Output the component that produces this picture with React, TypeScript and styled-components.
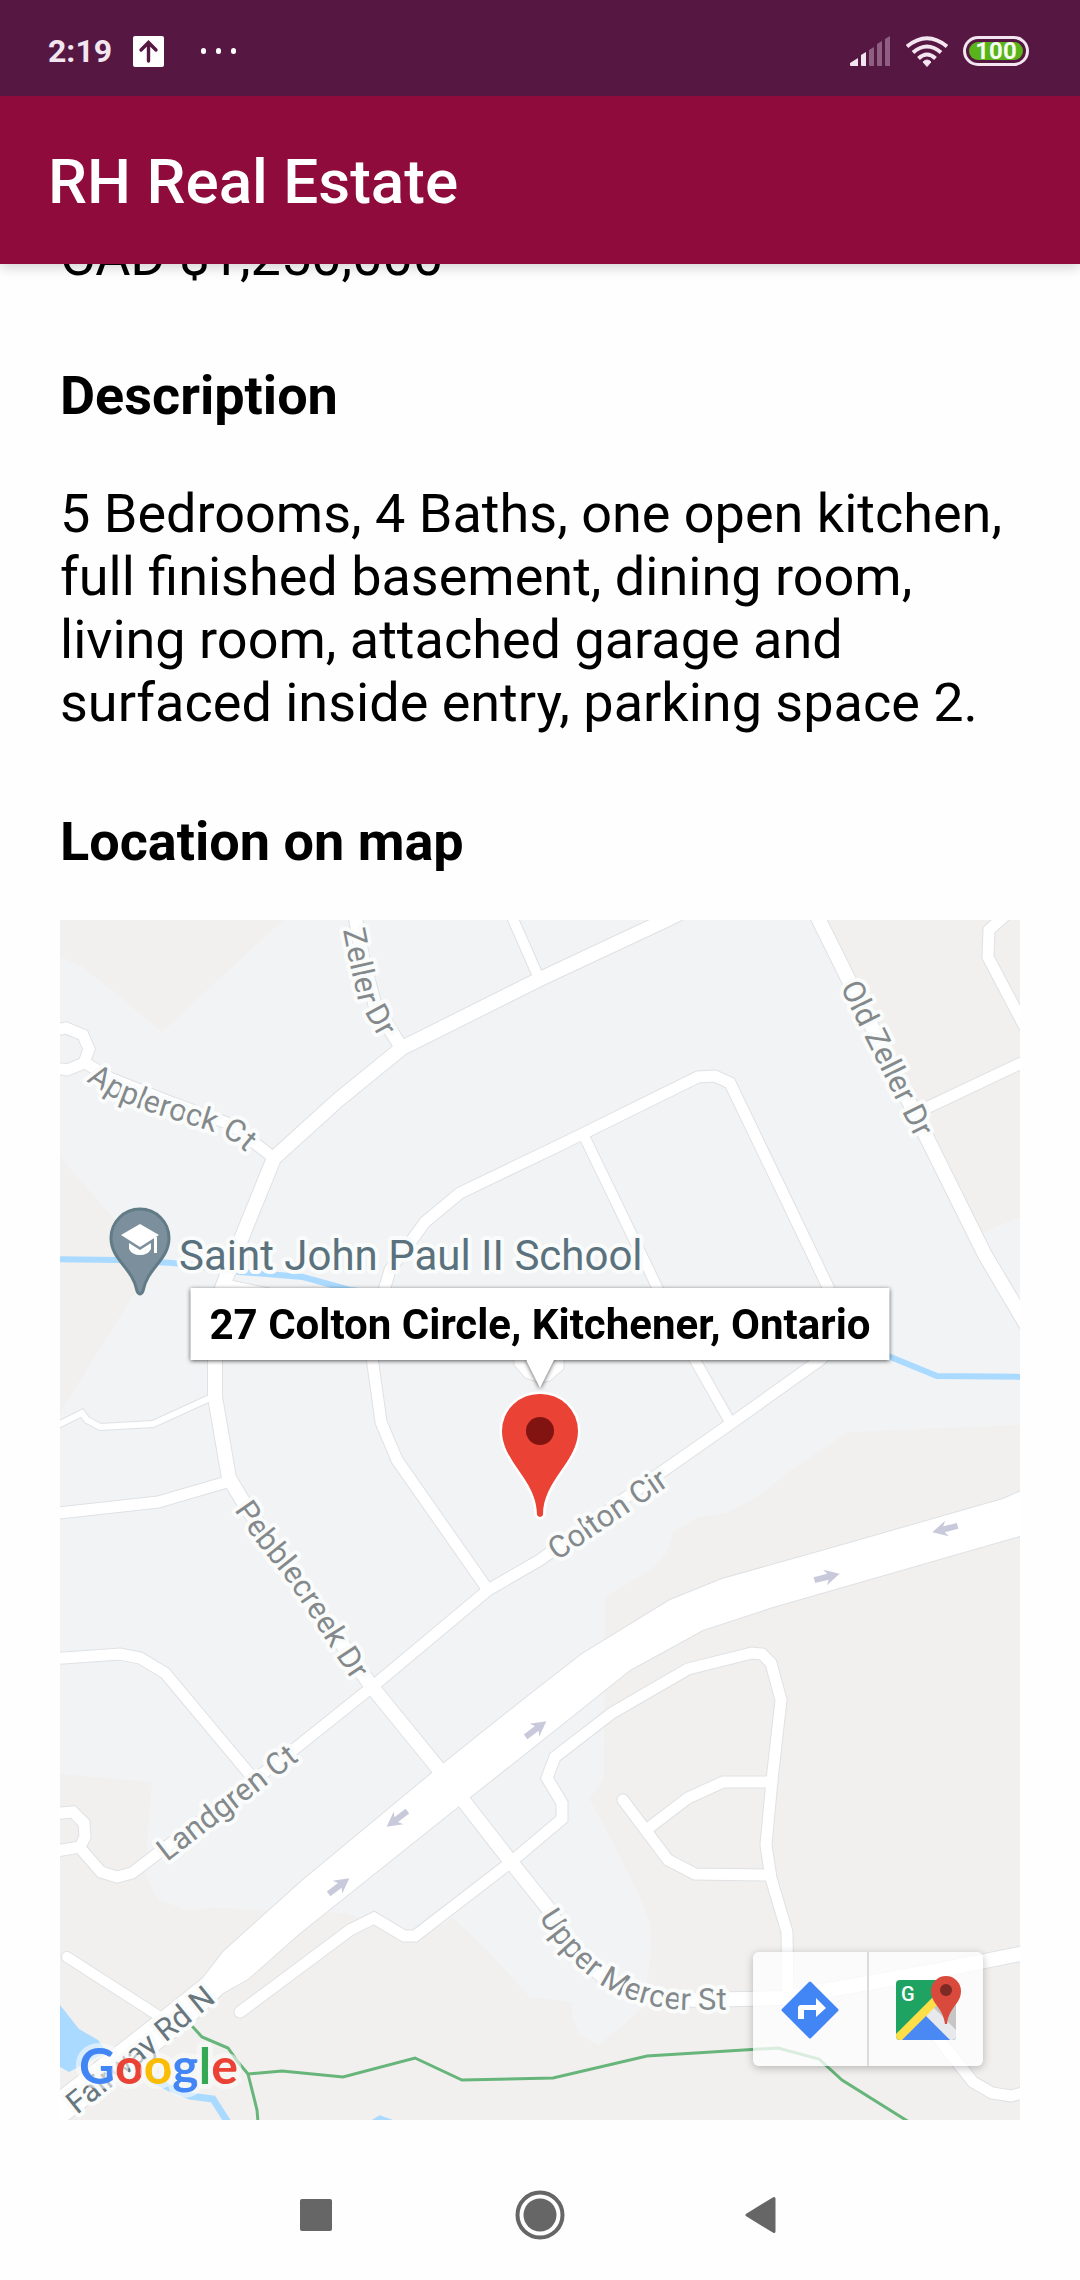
import React from "react";
import styled, { createGlobalStyle } from "styled-components";

const GlobalStyle = createGlobalStyle`
  * { box-sizing: border-box; }
  html, body { margin: 0; }
  body { background: #fefefe; color: #000; font-family: Roboto, "Noto Sans", sans-serif; }
`;

/* ---------- page frame ---------- */

const Screen = styled.div`
  display: flex;
  flex-direction: column;
  min-height: 100vh;
`;

const StatusBar = styled.div`
  display: flex;
  align-items: center;
  justify-content: space-between;
  height: 96px;
  padding: 6px 51px 0 48px;
  background: #561843;
  color: #f3e6f0;
  position: relative;
  z-index: 2;
`;

const StatusGroup = styled.div<{ $gap: number }>`
  display: flex;
  align-items: center;
  gap: ${(p) => p.$gap}px;
  svg { display: block; }
`;

const Clock = styled.time`
  font-size: 32px;
  line-height: 36px;
  font-weight: 700;
`;

const Dots = styled.span`
  display: flex;
  gap: 10px;
  margin-left: 16px;
`;

const Dot = styled.i`
  width: 5px;
  height: 6px;
  border-radius: 3px;
  background: #fff;
`;

const Battery = styled.div`
  display: flex;
  padding: 3px;
  width: 66px;
  height: 30px;
  border: 3px solid #f3e6f0;
  border-radius: 15px;
`;

const BatteryLevel = styled.span`
  flex: 1;
  border-radius: 9px;
  background: #59b31a;
  color: #f6fbf2;
  font-size: 24px;
  line-height: 18px;
  font-weight: 700;
  display: flex;
  justify-content: center;
`;

const AppBar = styled.header`
  display: flex;
  align-items: center;
  height: 168px;
  padding: 4px 48px 0;
  background: #8e0b3b;
  color: #fff;
  box-shadow: 0 3px 12px rgba(0, 0, 0, 0.18);
  position: relative;
  z-index: 1;
`;

const AppTitle = styled.h1`
  margin: 0;
  font-size: 62px;
  line-height: 70px;
  font-weight: 500;
`;

const Scroller = styled.main`
  flex: 1;
  padding: 0 60px 30px;
  margin-top: -39px;
`;

const BodyText = styled.p`
  margin: 0;
  font-size: 54px;
  line-height: 63px;
`;

const SectionTitle = styled.h2<{ $after: number }>`
  margin: 76px 0 ${(p) => p.$after}px;
  font-size: 54px;
  line-height: 63px;
  font-weight: 700;
`;

/* ---------- map ---------- */

const MapFrame = styled.section`
  position: relative;
  overflow: hidden;
`;

const MapSvg = styled.svg`
  display: block;
  width: 100%;
  height: auto;
`;

const Label = styled.text<{ $major?: boolean }>`
  font-family: Roboto, "Noto Sans", sans-serif;
  font-size: 31px;
  fill: ${(p) => (p.$major ? "#68767d" : "#84898c")};
  stroke: #fafbfb;
  stroke-width: 8px;
  stroke-linejoin: round;
  paint-order: stroke;
`;

const PlaceLabel = styled(Label)`
  font-size: 42px;
  fill: #5a727d;
`;

const LogoText = styled.text`
  font-family: Lato, Roboto, sans-serif;
  font-size: 50px;
  font-weight: 700;
  stroke: rgba(250, 250, 250, 0.6);
  stroke-width: 10px;
  stroke-linejoin: round;
  paint-order: stroke;
`;

const IconLetter = styled.text`
  font-family: Roboto, sans-serif;
  font-size: 20px;
  font-weight: 500;
  fill: #fff;
`;

const InfoWindow = styled.div`
  position: absolute;
  left: 50%;
  top: 39%;
  transform: translate(-50%, -100%);
  display: flex;
  flex-direction: column;
  align-items: center;
  filter: drop-shadow(0 1px 2px rgba(0, 0, 0, 0.65));
`;

const InfoBubble = styled.div`
  padding: 14px 19px 12px;
  background: #fff;
  font-size: 42px;
  line-height: 46px;
  font-weight: 700;
  white-space: nowrap;
`;

const InfoTail = styled.div`
  width: 28px;
  height: 28px;
  background: #fff;
  clip-path: polygon(0 0, 100% 0, 50% 100%);
`;

const MapToolbar = styled.div`
  position: absolute;
  right: 37px;
  bottom: 54px;
  display: flex;
  border-radius: 6px;
  background: rgba(255, 255, 255, 0.75);
  box-shadow: 0 2px 8px rgba(0, 0, 0, 0.25);
`;

const MapButton = styled.button`
  display: flex;
  align-items: center;
  justify-content: center;
  box-sizing: content-box;
  width: 114px;
  height: 114px;
  padding: 0;
  border: 0;
  background: none;
  & + & { border-left: 2px solid #dadbdc; }
`;

/* ---------- system navigation ---------- */

const NavBar = styled.nav`
  display: flex;
  justify-content: center;
  gap: 174px;
  height: 130px;
  align-items: center;
`;

const NavButton = styled.button`
  width: 50px;
  height: 50px;
  padding: 0;
  border: 0;
  background: none;
  svg { display: block; }
`;

type Road = { d: string; w: number };

const roads: Road[] = [
  { d: "M680 913L666 920L540 979L402 1048L338 1100L274 1158L242 1237L222 1288L215 1330V1397L229 1478L247 1508L372 1687L438 1768L511 1862L547 1907L573 1950L607 1980L657 1998L700 2000L783 1998L840 1988L940 1970L1030 1952", w: 14 },
  { d: "M354 910L363 960L375 1005L401 1047", w: 13 },
  { d: "M509 910L538 976", w: 10 },
  { d: "M50 1031L66 1028L83 1035L89 1049L84 1063L67 1070L50 1067", w: 11 },
  { d: "M84 1062L110 1078L173 1103L230 1124L274 1158", w: 11 },
  { d: "M488 1590L397 1460L381 1422L371 1350L385 1287L390 1270L425 1222L460 1193L560 1145L698 1077L715 1076L730 1083L828 1287L845 1335L820 1360L733 1422L653 1478L540 1560L488 1590L372 1687L287 1755L153 1857L132 1873L117 1877L101 1872L81 1849", w: 11 },
  { d: "M585 1138L657 1287L695 1360L730 1422", w: 10 },
  { d: "M222 1284L300 1300", w: 10 },
  { d: "M50 1429L82 1413L87 1420L100 1427L153 1424L210 1398", w: 6 },
  { d: "M50 1514L158 1502L227 1482", w: 11 },
  { d: "M50 1659L120 1654L140 1658L165 1673L252 1777", w: 11 },
  { d: "M50 1814L73 1812L84 1823L85 1837L80 1847L50 1852", w: 11 },
  { d: "M67 1957L165 2020", w: 10 },
  { d: "M240 2012L350 1930L374 1918L404 1936H415L511 1862L562 1819V1803L547 1778L555 1757L612 1713L688 1669L752 1653L762 1654L771 1663L781 1700L772 1780L766 1845L771 1878L787 1932L788 1998", w: 11 },
  { d: "M623 1800L668 1860L695 1874L770 1875", w: 11 },
  { d: "M646 1830L688 1798L723 1782H772", w: 11 },
  { d: "M814 910L922 1128L985 1255L1030 1331", w: 14 },
  { d: "M920 1111L1030 1059", w: 11 },
  { d: "M1010 911L989 930L988 957L1030 1037", w: 11 },
  { d: "M900 1985L945 2047L973 2082L992 2093L1011 2096L1030 2091", w: 11 },
];

const highway =
  "M1030 1487L1003 1499L832 1548L722 1579L670 1600L582 1654L523 1700L444 1763L303 1880L223 1952L203 1978L168 2006L50 2098V2134L187 2028L223 1993L248 1979L300 1933L459 1806L560 1726L630 1670L703 1630L773 1607L1030 1533Z";

const laneArrows = [
  { x: 827, y: 1577, r: -14 },
  { x: 945, y: 1529, r: 166 },
  { x: 536, y: 1729, r: -37 },
  { x: 397, y: 1819, r: 143 },
  { x: 339, y: 1886, r: -37 },
];

const streetNames = [
  { id: "zeller", text: "Zeller Dr", d: "M343 930L350 965L358 1000L380 1040L390 1060" },
  { id: "applerock", text: "Applerock Ct", d: "M86 1081L115 1099L143 1110L217 1133L232 1141L270 1172" },
  { id: "oldzeller", text: "Old Zeller Dr", d: "M840 987L930 1168" },
  { id: "pebblecreek", text: "Pebblecreek Dr", d: "M234 1510L257 1543L285 1578L310 1615L332 1650L370 1708" },
  { id: "colton", text: "Colton Cir", d: "M557 1561L693 1469" },
  { id: "landgren", text: "Landgren Ct", d: "M167 1862L320 1744" },
  { id: "uppermercer", text: "Upper Mercer St", d: "M539 1917C558 1950 584 1976 613 1992C642 2006 670 2010 692 2010H780" },
];

const CityMap = () => (
  <MapSvg viewBox="60 920 960 1200" role="img" aria-label="Map of Kitchener, Ontario">
    <rect x="60" y="920" width="960" height="1200" fill="#f1f3f5" />
    <g fill="#f1f0ee">
      <path d="M60 920H283L162 1032L120 997L83 967L60 957Z" />
      <path d="M60 1157L112 1217L145 1260L134 1294L60 1412Z" />
      <path d="M820 920H1020V1217L982 1233Z" />
      <path d="M1020 1425L848 1432L787 1473L757 1497L727 1513L698 1517L673 1532L668 1550L657 1565L637 1578L605 1597L604 1777L598 1788L589 1798L615 1847L640 1897L650 1923L651 1950L647 1983L643 2007L620 2028L598 2045L580 2035L572 2017V2002L530 1997L487 1950L453 1918L420 1938L375 1925L347 1913L260 1910L213 1908L187 1910L160 1900L152 1890L145 1870L152 1782L60 1774V2120H1020Z" />
    </g>
    <path d="M60 2005L79 2029L98 2040L107 2052L69 2072L60 2067Z" fill="#aadaff" />
    <g fill="none" stroke="#aadaff" strokeWidth="7">
      <path d="M150 2078L170 2088L190 2096L213 2099L229 2124" />
      <path d="M372 2124L380 2119L394 2124" />
      <path d="M50 1259L117 1260L173 1263L240 1272L303 1277L350 1290L888 1356L937 1376L1030 1377" strokeWidth="6" />
    </g>
    <g fill="none" stroke="#dfe1e4" strokeLinecap="round">
      {roads.map((r) => (
        <path key={r.d} d={r.d} strokeWidth={r.w + 2} />
      ))}
      <path d={highway} strokeWidth="2" />
    </g>
    <g fill="none" stroke="#fff" strokeLinecap="round">
      {roads.map((r) => (
        <path key={r.d} d={r.d} strokeWidth={r.w} />
      ))}
    </g>
    <path d={highway} fill="#fff" />
    <path d="M514 1350V1365L525 1378L540 1383L550 1381L564 1369V1350Z" fill="#fff" stroke="#dfe1e4" />
    <g fill="#c8cadc">
      {laneArrows.map((a) => (
        <path
          key={a.x}
          d="M-13 -3H1L-2 -8L13 0L-2 8L1 3H-13Z"
          transform={`translate(${a.x} ${a.y}) rotate(${a.r})`}
        />
      ))}
    </g>
    <g fill="none" stroke="#67b57b" strokeWidth="3">
      <path d="M192 2026L202 2037L228 2048L238 2062L248 2074L282 2071L343 2077L415 2058L462 2080L553 2078L647 2056L778 2048L819 2059L842 2080L909 2122" />
      <path d="M248 2074L257 2110L258 2122" />
    </g>

    <defs>
      {streetNames.map((s) => (
        <path key={s.id} id={s.id} d={s.d} />
      ))}
      <path id="fairway" d="M77 2115L240 1982" />
    </defs>
    {streetNames.map((s) => (
      <Label key={s.id}>
        <textPath href={`#${s.id}`}>{s.text}</textPath>
      </Label>
    ))}
    <Label $major>
      <textPath href="#fairway">Fairway Rd N</textPath>
    </Label>

    <path
      d="M140 1209A29 29 0 0 0 111 1238C111 1260 133 1268 137 1291Q140 1297 143 1291C147 1268 169 1260 169 1238A29 29 0 0 0 140 1209Z"
      fill="#7b909c"
      stroke="#617c87"
      strokeWidth="3"
    />
    <g fill="#fff">
      <path d="M121 1235L140 1224L159 1235L140 1247Z" />
      <path d="M129 1243L140 1250L151 1243V1249Q148 1255 140 1255Q132 1255 129 1249Z" />
      <path d="M154 1237H157V1253H154Z" />
    </g>
    <PlaceLabel x="179" y="1270">Saint John Paul II School</PlaceLabel>

    <path
      d="M540 1394A37 37 0 0 0 502 1431C502 1462 537 1480 537 1515Q540 1519 543 1515C543 1480 578 1462 578 1431A37 37 0 0 0 540 1394Z"
      fill="#ea4335"
      stroke="#fff"
      strokeWidth="5"
      paintOrder="stroke"
    />
    <circle cx="540" cy="1431" r="14" fill="#811411" />

    <LogoText x="79" y="2084">
      <tspan fill="#4285f4">G</tspan>
      <tspan fill="#ea4335">o</tspan>
      <tspan fill="#fbbc05">o</tspan>
      <tspan fill="#4285f4">g</tspan>
      <tspan fill="#34a853">l</tspan>
      <tspan fill="#ea4335">e</tspan>
    </LogoText>
  </MapSvg>
);

const DirectionsIcon = () => (
  <svg width="60" height="60" viewBox="-1 -2 60 60" aria-hidden="true">
    <path d="M29 2L56 29L29 56L2 29Z" fill="#4285f4" stroke="#4285f4" strokeWidth="3" strokeLinejoin="round" />
    <path d="M17 38V27Q17 24 20 24H35V17L45 27L35 36V29H23V38Z" fill="#fff" />
  </svg>
);

const MapsIcon = () => (
  <svg width="70" height="70" viewBox="-4 -1 70 70" aria-hidden="true">
    <clipPath id="tile">
      <rect x="1" y="5" width="60" height="60" rx="4" />
    </clipPath>
    <g clipPath="url(#tile)">
      <rect x="1" y="5" width="60" height="60" fill="#1fa362" />
      <path d="M36 30L61 5V65Z" fill="#c6c6c6" />
      <path d="M1 65L31 35L61 65Z" fill="#4a89f3" />
      <path d="M31 41L36 30L66 60V70H60Z" fill="#e8e9ec" />
      <path d="M-4 64L41 19L46 26L5 67Z" fill="#ffdf48" />
    </g>
    <IconLetter x="6" y="26">G</IconLetter>
    <path d="M51 1A15 15 0 0 0 36 16C36 29 48 32 50 49H52C54 32 66 29 66 16A15 15 0 0 0 51 1Z" fill="#da4a3c" />
    <circle cx="51" cy="15" r="6" fill="#7d2a25" />
  </svg>
);

const App = () => (
  <>
    <GlobalStyle />
    <Screen>
      <StatusBar>
        <StatusGroup $gap={21}>
          <Clock>2:19</Clock>
          <svg width="31" height="31" viewBox="0 0 31 31" aria-hidden="true">
            <rect width="31" height="31" rx="2" fill="#fff" />
            <path d="M15.500 25V7M8 14L15.500 6.500L23 14" fill="none" stroke="#561843" strokeWidth="3.400" strokeLinecap="round" />
          </svg>
          <Dots>
            <Dot />
            <Dot />
            <Dot />
          </Dots>
        </StatusGroup>
        <StatusGroup $gap={15}>
          <svg width="41" height="30" viewBox="0 0 41 30" aria-hidden="true">
            <path d="M0 27L8 22V30H1Q0 30 0 29ZM11 19L16 16V30H12Q11 30 11 29Z" fill="#f3e6f0" />
            <path d="M19 14L24 11V30H20Q19 30 19 29ZM27 8L32 5V30H28Q27 30 27 29ZM35 3L40 0V30H36Q35 30 35 29Z" fill="#8f5f82" />
          </svg>
          <svg width="42" height="31" viewBox="0 0 42 31" aria-hidden="true">
            <g fill="none" stroke="#f3e6f0" strokeWidth="4">
              <path d="M1 10.500Q21 -6 41 10.500" />
              <path d="M7 16.500Q21 4.500 35 16.500" />
              <path d="M12.500 22.500Q21 14.500 29.500 22.500" />
            </g>
            <path d="M17 26Q21 22 25 26L21 30.500Z" fill="#f3e6f0" stroke="#f3e6f0" strokeLinejoin="round" />
          </svg>
          <Battery>
            <BatteryLevel>100</BatteryLevel>
          </Battery>
        </StatusGroup>
      </StatusBar>

      <AppBar>
        <AppTitle>RH Real Estate</AppTitle>
      </AppBar>

      <Scroller>
        <BodyText>CAD $1,250,000</BodyText>
        <SectionTitle $after={55}>Description</SectionTitle>
        <BodyText>
          5 Bedrooms, 4 Baths, one open kitchen, full finished basement, dining room, living room,
          attached garage and surfaced inside entry, parking space 2.
        </BodyText>
        <SectionTitle $after={47}>Location on map</SectionTitle>
        <MapFrame>
          <CityMap />
          <InfoWindow>
            <InfoBubble>27 Colton Circle, Kitchener, Ontario</InfoBubble>
            <InfoTail />
          </InfoWindow>
          <MapToolbar>
            <MapButton aria-label="Directions">
              <DirectionsIcon />
            </MapButton>
            <MapButton aria-label="Open in Google Maps">
              <MapsIcon />
            </MapButton>
          </MapToolbar>
        </MapFrame>
      </Scroller>

      <NavBar>
        <NavButton aria-label="Recent apps">
          <svg width="50" height="50" viewBox="0 0 50 50">
            <rect x="9" y="9" width="32" height="32" rx="2" fill="#666" />
          </svg>
        </NavButton>
        <NavButton aria-label="Home">
          <svg width="50" height="50" viewBox="0 0 50 50">
            <circle cx="25" cy="25" r="22.500" fill="none" stroke="#666" strokeWidth="4" />
            <circle cx="25" cy="25" r="16.500" fill="#666" />
          </svg>
        </NavButton>
        <NavButton aria-label="Back">
          <svg width="50" height="50" viewBox="0 0 50 50">
            <path d="M8 25L35 8.500V41.500Z" fill="#666" stroke="#666" strokeWidth="3" strokeLinejoin="round" />
          </svg>
        </NavButton>
      </NavBar>
    </Screen>
  </>
);

export default App;
